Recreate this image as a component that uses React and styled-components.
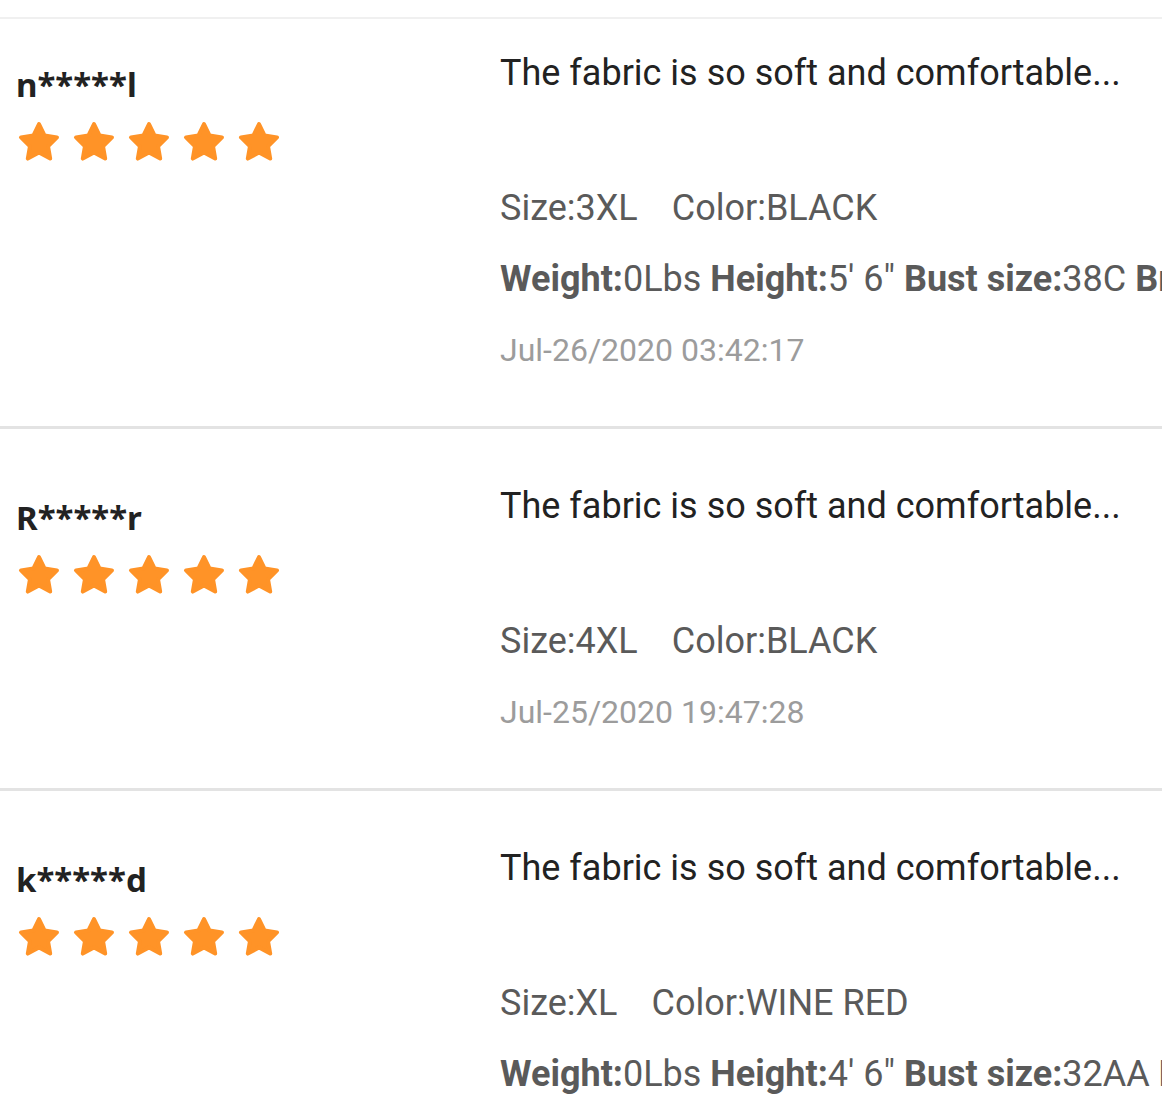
import React from "react";
import styled, { createGlobalStyle } from "styled-components";

const Global = createGlobalStyle`
  html, body { margin: 0; padding: 0; background: #fff; overflow: hidden; }
  body { font-family: Roboto, "Open Sans", Arial, sans-serif; }
`;

const Page = styled.div`
  width: 1162px;
  padding-top: 17px;
  overflow: hidden;
`;

const TopLine = styled.div`
  height: 2px;
  background: #f0f0f0;
`;

const Row = styled.div`
  display: flex;
  padding: ${(p) => (p.$first ? "30px" : "53px")} 0 52px;
  border-bottom: 3px solid #e3e3e3;
`;

const Left = styled.div`
  width: 500px;
  flex: none;
  padding-left: 16px;
  box-sizing: border-box;
  padding-top: 12px;
`;

const Name = styled.div`
  font-family: "Noto Sans", Roboto, sans-serif;
  font-weight: 700;
  font-size: 33px;
  line-height: 48px;
  color: #222;
`;

const Stars = styled.div`
  display: flex;
  gap: 11px;
  margin-top: 12px;
  padding-left: 1px;
`;

const Right = styled.div`
  flex: 1;
  min-width: 0;
  white-space: nowrap;
  overflow: hidden;
  font-family: Roboto, sans-serif;
`;

const Comment = styled.div`
  font-size: 36px;
  line-height: 48px;
  color: #222;
  margin-bottom: 87px;
`;

const Spec = styled.div`
  font-size: 36px;
  line-height: 48px;
  color: #5a5a5a;
  margin-bottom: 23px;
  display: flex;
  gap: ${(p) => p.$gap || "0"};
`;

const Label = styled.b`
  font-weight: 700;
  color: #5a5a5a;
`;

const DateText = styled.div`
  font-size: 32px;
  line-height: 48px;
  margin-top: 1px;
  color: #9c9c9c;
`;

const Star = () => (
  <svg width="44" height="42" viewBox="0 0 44 42">
    <path
      d="M22 3 L27.6 14.6 L40 16.4 L31 25.2 L33.2 37.6 L22 31.6 L10.8 37.6 L13 25.2 L4 16.4 L16.4 14.6 Z"
      fill="#FF9327"
      stroke="#FF9327"
      strokeWidth="4"
      strokeLinejoin="round"
    />
  </svg>
);

const reviews = [
  {
    name: "n*****l",
    size: "3XL",
    color: "BLACK",
    body: { weight: "0Lbs", height: "5' 6\"", bust: "38C" },
    date: "Jul-26/2020 03:42:17",
  },
  {
    name: "R*****r",
    size: "4XL",
    color: "BLACK",
    date: "Jul-25/2020 19:47:28",
  },
  {
    name: "k*****d",
    size: "XL",
    color: "WINE RED",
    body: { weight: "0Lbs", height: "4' 6\"", bust: "32AA" },
    date: "Jul-24/2020 10:12:05",
  },
];

export default function App() {
  return (
    <Page>
      <Global />
      <TopLine />
      {reviews.map((r, i) => (
        <Row key={i} $first={i === 0}>
          <Left>
            <Name>{r.name}</Name>
            <Stars>
              {[0, 1, 2, 3, 4].map((s) => (
                <Star key={s} />
              ))}
            </Stars>
          </Left>
          <Right>
            <Comment>The fabric is so soft and comfortable...</Comment>
            <Spec $gap="34px">
              <span>Size:{r.size}</span>
              <span>Color:{r.color}</span>
            </Spec>
            {r.body && (
              <Spec>
                <span>
                  <Label>Weight:</Label>
                  {r.body.weight} <Label>Height:</Label>
                  {r.body.height} <Label>Bust size:</Label>
                  {r.body.bust} <Label>Bra size:</Label>B
                </span>
              </Spec>
            )}
            <DateText>{r.date}</DateText>
          </Right>
        </Row>
      ))}
    </Page>
  );
}
